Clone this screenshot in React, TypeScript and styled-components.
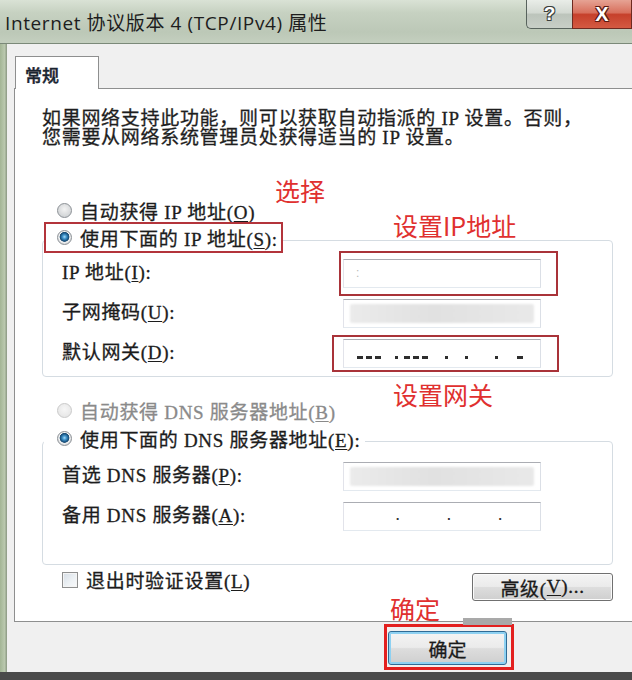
import React from "react";
import styled, { createGlobalStyle } from "styled-components";

const GlobalStyle = createGlobalStyle`
  html, body {
    margin: 0;
    padding: 0;
    background: #f0f0f0;
  }
  * {
    box-sizing: border-box;
  }
`;

const uiFont = `"Liberation Serif", "Noto Sans CJK SC", serif`;
const sansFont = `"Noto Sans CJK SC", sans-serif`;

const Window = styled.div`
  width: 632px;
  height: 680px;
  display: flex;
  flex-direction: column;
  overflow: hidden;
  font-family: ${uiFont};
  color: #1c1c1c;
`;

const TitleBar = styled.div`
  height: 44px;
  flex-shrink: 0;
  display: flex;
  justify-content: space-between;
  background: linear-gradient(180deg, #d9e2d5 0%, #c6d1c1 30%, #bcc8b7 75%, #c4cfbf 100%);
  border-bottom: 1px solid #7b8979;
`;

const TitleText = styled.div`
  padding: 8px 0 0 5px;
  font-family: "Open Sans", "Noto Sans CJK SC", sans-serif;
  font-size: 19px;
  letter-spacing: 0.6px;
  color: #1d1d1d;
  white-space: nowrap;
`;

const Caption = styled.div`
  display: flex;
  align-self: flex-start;
`;

const CaptionButton = styled.div<{ $kind: "help" | "close" }>`
  height: 29px;
  width: ${(p) => (p.$kind === "help" ? 46 : 60)}px;
  display: flex;
  align-items: center;
  justify-content: center;
  font-family: "Liberation Sans", sans-serif;
  font-weight: bold;
  font-size: ${(p) => (p.$kind === "help" ? 19 : 20)}px;
  color: #fff;
  border: 1px solid ${(p) => (p.$kind === "help" ? "#58635d" : "#6e2a20")};
  border-top: none;
  border-right: ${(p) => (p.$kind === "help" ? "none" : "1px solid #6e2a20")};
  border-bottom-left-radius: ${(p) => (p.$kind === "help" ? 5 : 0)}px;
  background: ${(p) =>
    p.$kind === "help"
      ? "linear-gradient(180deg, #e9ede8 0%, #d3d9d2 45%, #bcc4bb 52%, #c8cfc7 100%)"
      : "linear-gradient(180deg, #e6a394 0%, #d8705d 45%, #c6402b 52%, #d45a42 100%)"};
  text-shadow: ${(p) => {
    const c = p.$kind === "help" ? "#3b3f3c" : "#5a1a12";
    return `1px 1px 0 ${c}, -1px -1px 0 ${c}, 1px -1px 0 ${c}, -1px 1px 0 ${c}`;
  }};
`;

const Middle = styled.div`
  flex: 1;
  display: flex;
  min-height: 0;
`;

const LeftFrame = styled.div`
  width: 7px;
  flex-shrink: 0;
  background: linear-gradient(90deg, #a3b595 0%, #bac8ae 65%, #8a9782 100%);
`;

const Client = styled.div`
  flex: 1;
  display: flex;
  flex-direction: column;
  padding: 12px 0 0 7px;
  background: #f0f0f0;
`;

const TabStrip = styled.div`
  display: flex;
  padding-left: 1px;
  position: relative;
  z-index: 1;
  margin-bottom: -1px;
`;

const Tab = styled.div`
  width: 84px;
  height: 33px;
  padding: 5px 0 0 9px;
  border: 1px solid #8e8f8f;
  border-bottom: none;
  background: #fff;
  font-family: ${sansFont};
  font-size: 17px;
  font-weight: 500;
  color: #1a2430;
  -webkit-text-stroke: 0.4px #1a2430;
`;

const Panel = styled.div`
  position: relative;
  height: 534px;
  border: 1px solid #8e8f8f;
  border-right: none;
  background: #fff;
  padding: 20px 19px 0 27px;
  display: flex;
  flex-direction: column;
  font-size: 19px;
  letter-spacing: 0.7px;
  -webkit-text-stroke: 0.3px currentColor;
`;

const Intro = styled.p`
  margin: 0;
  line-height: 19px;
  color: #1e1e1e;
`;

const OptionRow = styled.div<{ $mt: number; $disabled?: boolean }>`
  display: flex;
  align-items: center;
  gap: 8px;
  height: 28px;
  margin-top: ${(p) => p.$mt}px;
  padding-left: 15px;
  color: ${(p) => (p.$disabled ? "#8a8a8a" : "#1c1c1c")};
`;

const Radio = styled.span<{ $checked?: boolean; $disabled?: boolean }>`
  width: 15px;
  height: 15px;
  flex-shrink: 0;
  border-radius: 50%;
  border: 1px solid ${(p) => (p.$disabled ? "#c9c9c9" : "#8b9095")};
  background: ${(p) =>
    p.$checked
      ? "radial-gradient(circle at 50% 45%, #a8dcf7 0, #3f93cb 2px, #1a5583 4px, #1d4e74 4.6px, #f5f5f5 5.2px, #d8dadc 7px)"
      : p.$disabled
      ? "radial-gradient(circle at 50% 40%, #f6f6f6 0, #e6e6e6 80%)"
      : "radial-gradient(circle at 50% 40%, #f3f3f3 0, #cfd2d4 80%)"};
`;

const Key = styled.span`
  text-decoration: underline;
  text-underline-offset: 2px;
`;

const GroupBox = styled.div<{ $mt: number; $pb: number }>`
  margin-top: ${(p) => p.$mt}px;
  padding-bottom: ${(p) => p.$pb}px;
  border: 1px solid #d5dce2;
  border-radius: 4px;
  display: flex;
  flex-direction: column;
`;

const GroupHeader = styled.div<{ $marked?: boolean }>`
  align-self: flex-start;
  display: flex;
  align-items: center;
  gap: 8px;
  height: 31px;
  margin: -19px 0 0 1px;
  padding: 0 3px 0 11px;
  background: #fff;
  border: 2px solid ${(p) => (p.$marked ? "#b3343b" : "#fff")};
`;

const FieldRow = styled.div<{ $first?: boolean }>`
  display: grid;
  grid-template-columns: 281px 198px;
  align-items: center;
  height: 40px;
  padding-left: 19px;
  margin-top: ${(p) => (p.$first ? 2 : 0)}px;
`;

const FieldLabel = styled.span`
  margin-bottom: 6px;
`;

const Field = styled.div`
  position: relative;
  height: 29px;
`;

const TextBox = styled.div`
  height: 29px;
  display: flex;
  align-items: center;
  border: 1px solid;
  border-color: #abadb3 #dbdfe6 #e3e9ef #e2e3ea;
  background: #fff;
  -webkit-text-stroke: 0;
`;

const Smudge = styled.div`
  flex: 1;
  height: 19px;
  margin: 0 6px;
  border-radius: 2px;
  background: linear-gradient(90deg, #ebebeb 0%, #e1e1e1 45%, #e9e9e9 100%);
  filter: blur(1.2px);
`;

const Caret = styled.span`
  margin-left: 12px;
  font-family: "Liberation Sans", sans-serif;
  font-size: 12px;
  color: #b9b9b9;
`;

const Dash = styled.span<{ $ml: number; $w: number }>`
  width: ${(p) => p.$w}px;
  height: 3px;
  margin: 8px 0 0 ${(p) => p.$ml}px;
  background: #2e2e2e;
  filter: blur(0.4px);
  flex-shrink: 0;
`;

const IpDots = styled.div`
  display: flex;
  gap: 46px;
  padding: 0 0 4px 51px;
  font-family: "Liberation Sans", sans-serif;
  font-size: 19px;
  letter-spacing: 0;
  color: #333;
`;

const Mark = styled.div<{ $t: number; $r: number; $b: number; $l: number }>`
  position: absolute;
  top: ${(p) => p.$t}px;
  right: ${(p) => p.$r}px;
  bottom: ${(p) => p.$b}px;
  left: ${(p) => p.$l}px;
  border: 2px solid #a93339;
  pointer-events: none;
`;

const Note = styled.div<{ $x: number; $y: number }>`
  position: absolute;
  left: ${(p) => p.$x}px;
  top: ${(p) => p.$y}px;
  font-family: ${sansFont};
  font-size: 25px;
  line-height: 1;
  letter-spacing: 0;
  -webkit-text-stroke: 0;
  color: #e0302f;
  white-space: nowrap;
`;

const BottomRow = styled.div`
  display: flex;
  justify-content: space-between;
  align-items: flex-start;
  margin-top: 8px;
  padding-left: 20px;
`;

const CheckLabel = styled.label`
  display: flex;
  align-items: center;
  gap: 8px;
  margin-top: -7px;
`;

const Checkbox = styled.span`
  width: 16px;
  height: 16px;
  border: 1px solid #8e8f8f;
  box-shadow: inset 0 0 0 1px #f4f4f4;
  background: linear-gradient(135deg, #d6dee6 0%, #eef2f5 60%, #f8f9fa 100%);
`;

const Button = styled.div<{ $w: number; $h: number; $default?: boolean }>`
  width: ${(p) => p.$w}px;
  height: ${(p) => p.$h}px;
  display: flex;
  align-items: center;
  justify-content: center;
  border: 1px solid ${(p) => (p.$default ? "#2f6b95" : "#707070")};
  border-radius: 3px;
  box-shadow: ${(p) => (p.$default ? "inset 0 0 0 2px #8ed1f2" : "inset 0 0 0 1px #fbfbfb")};
  background: linear-gradient(180deg, #f4f4f4 0%, #ebebeb 48%, #dddddd 52%, #cfcfcf 100%);
  font-family: ${uiFont};
  font-size: 19px;
  color: #1a1a1a;
  -webkit-text-stroke: 0.3px #1a1a1a;
`;

const Footer = styled.div`
  position: relative;
  height: 50px;
  padding: 2px 0 0 370px;
`;

const OkMark = styled.div`
  display: inline-flex;
  border: 3px solid #e3201f;
  padding: 4px 4px 2px 1px;
`;

const Scrap = styled.div`
  position: absolute;
  left: 449px;
  top: -4px;
  width: 49px;
  height: 7px;
  background: #a9a9a9;
`;

const BottomStrip = styled.div`
  height: 8px;
  flex-shrink: 0;
  background: #4a4a4a;
`;

const gatewayDashes = [
  { ml: 13, w: 6 },
  { ml: 3, w: 6 },
  { ml: 3, w: 6 },
  { ml: 14, w: 3 },
  { ml: 6, w: 6 },
  { ml: 3, w: 6 },
  { ml: 3, w: 6 },
  { ml: 17, w: 3 },
  { ml: 17, w: 3 },
  { ml: 27, w: 3 },
  { ml: 19, w: 6 },
];

export default function App() {
  return (
    <Window>
      <GlobalStyle />
      <TitleBar>
        <TitleText>Internet 协议版本 4 (TCP/IPv4) 属性</TitleText>
        <Caption>
          <CaptionButton $kind="help">?</CaptionButton>
          <CaptionButton $kind="close">X</CaptionButton>
        </Caption>
      </TitleBar>
      <Middle>
        <LeftFrame />
        <Client>
          <TabStrip>
            <Tab>常规</Tab>
          </TabStrip>
          <Panel>
            <Intro>
              如果网络支持此功能，则可以获取自动指派的 IP 设置。否则，
              <br />
              您需要从网络系统管理员处获得适当的 IP 设置。
            </Intro>

            <OptionRow $mt={49}>
              <Radio />
              <span>
                自动获得 IP 地址(<Key>O</Key>)
              </span>
            </OptionRow>

            <GroupBox $mt={16} $pb={3}>
              <GroupHeader $marked>
                <Radio $checked />
                <span>
                  使用下面的 IP 地址(<Key>S</Key>):
                </span>
              </GroupHeader>
              <FieldRow>
                <FieldLabel>
                  IP 地址(<Key>I</Key>):
                </FieldLabel>
                <Field>
                  <TextBox>
                    <Caret>:</Caret>
                  </TextBox>
                  <Mark $t={-8} $r={-17} $b={-8} $l={-4} />
                </Field>
              </FieldRow>
              <FieldRow>
                <FieldLabel>
                  子网掩码(<Key>U</Key>):
                </FieldLabel>
                <Field>
                  <TextBox>
                    <Smudge />
                  </TextBox>
                </Field>
              </FieldRow>
              <FieldRow>
                <FieldLabel>
                  默认网关(<Key>D</Key>):
                </FieldLabel>
                <Field>
                  <TextBox>
                    {gatewayDashes.map((d, i) => (
                      <Dash key={i} $ml={d.ml} $w={d.w} />
                    ))}
                  </TextBox>
                  <Mark $t={-4} $r={-18} $b={-4} $l={-11} />
                </Field>
              </FieldRow>
            </GroupBox>

            <OptionRow $mt={19} $disabled>
              <Radio $disabled />
              <span>
                自动获得 DNS 服务器地址(<Key>B</Key>)
              </span>
            </OptionRow>

            <GroupBox $mt={17} $pb={28}>
              <GroupHeader>
                <Radio $checked />
                <span>
                  使用下面的 DNS 服务器地址(<Key>E</Key>):
                </span>
              </GroupHeader>
              <FieldRow $first>
                <FieldLabel>
                  首选 DNS 服务器(<Key>P</Key>):
                </FieldLabel>
                <Field>
                  <TextBox>
                    <Smudge />
                  </TextBox>
                </Field>
              </FieldRow>
              <FieldRow>
                <FieldLabel>
                  备用 DNS 服务器(<Key>A</Key>):
                </FieldLabel>
                <Field>
                  <TextBox>
                    <IpDots>
                      <span>.</span>
                      <span>.</span>
                      <span>.</span>
                    </IpDots>
                  </TextBox>
                </Field>
              </FieldRow>
            </GroupBox>

            <BottomRow>
              <CheckLabel>
                <Checkbox />
                <span>
                  退出时验证设置(<Key>L</Key>)
                </span>
              </CheckLabel>
              <Button $w={141} $h={28}>
                高级(<Key>V</Key>)...
              </Button>
            </BottomRow>

            <Note $x={260} $y={89}>选择</Note>
            <Note $x={378} $y={124}>设置IP地址</Note>
            <Note $x={378} $y={293}>设置网关</Note>
            <Note $x={375} $y={507}>确定</Note>
          </Panel>
          <Footer>
            <Scrap />
            <OkMark>
              <Button $w={119} $h={34} $default>
                确定
              </Button>
            </OkMark>
          </Footer>
        </Client>
      </Middle>
      <BottomStrip />
    </Window>
  );
}
